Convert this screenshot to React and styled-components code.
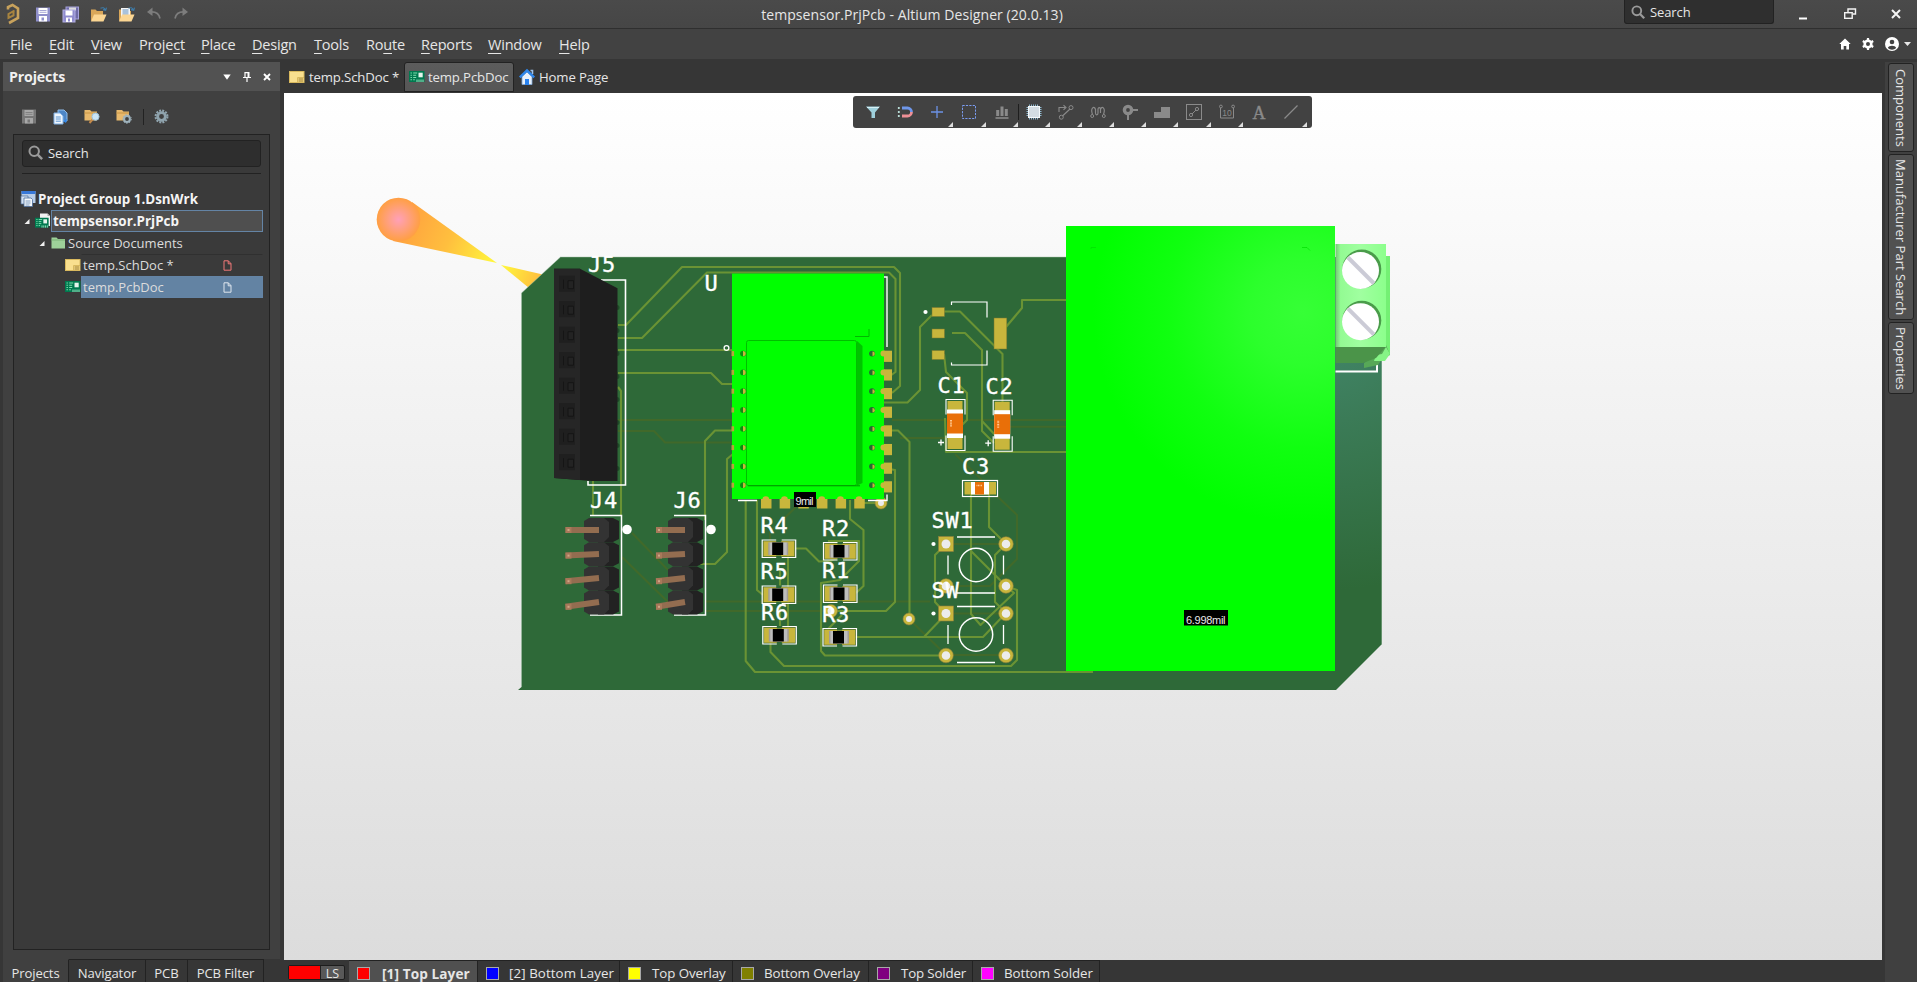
import React from "react";
import styled, { createGlobalStyle } from "styled-components";

const Global = createGlobalStyle`
  * { box-sizing: border-box; }
  html, body { margin: 0; height: 100%; overflow: hidden; }
  body { font-family: "Open Sans", "Noto Sans", sans-serif; font-size: 14px; color: #e6e6e6; background: #363636; }
`;

/* ---------- shell ---------- */
const Shell = styled.div`
  width: 100vw; height: 982px; display: flex; flex-direction: column; background: #363636; overflow: hidden;
`;
const TitleBar = styled.header`
  height: 29px; flex: none; display: grid; grid-template-columns: 700px 424px 1fr;
  background: linear-gradient(#4a4a4a, #464646); border-bottom: 1px solid #2f2f2f;
`;
const QuickBar = styled.div`
  display: flex; align-items: center; padding: 0 0 1px 4px; gap: 11px;
`;
const Title = styled.div`
  text-align: center; font-size: 14px; line-height: 29px; letter-spacing: 0.07px; white-space: nowrap;
`;
const TitleRight = styled.div`
  display: flex; align-items: flex-start; padding-left: 500px;
`;
const TitleSearch = styled.div`
  width: 150px; height: 24px; display: flex; align-items: center; gap: 5px; padding: 0 0 0 6px;
  background: #2f2f2f; border: 1px solid #222; border-top: 0; border-radius: 0 0 3px 3px; font-size: 13px; letter-spacing: -0.1px;
`;
const WinButtons = styled.div`
  flex: 1; height: 28px; display: flex; align-items: center; justify-content: space-between; padding: 0 16px 0 24px;
`;
const MenuBar = styled.nav`
  height: 30px; flex: none; display: flex; align-items: center; background: #424242; padding-left: 10px;
`;
const MenuItem = styled.span`
  width: ${(p) => p.$w}px; font-size: 14.5px; letter-spacing: -0.2px; white-space: nowrap; line-height: 30px; padding-top: 1px;
  u { text-underline-offset: 3px; text-decoration-thickness: 1px; }
`;
const MenuIcons = styled.div`
  margin-left: auto; display: flex; align-items: center; padding-right: 6px; gap: 11px;
`;
const UserGroup = styled.div` display: flex; align-items: center; gap: 5px; `;

const Work = styled.div` flex: 1; display: flex; min-height: 0; `;

/* ---------- projects panel ---------- */
const LeftColumn = styled.aside`
  width: 281px; flex: none; display: flex; flex-direction: column; padding: 3px 1px 0 3px;
`;
const PanelHead = styled.div`
  height: 29px; flex: none; display: flex; align-items: center; background: #525252; padding: 0 9px 0 6px; gap: 12px;
`;
const PanelTitle = styled.div`
  flex: 1; font-weight: 700; font-size: 14.2px; letter-spacing: -0.15px; color: #f0f0f0;
`;
const PanelBody = styled.div`
  flex: 1; min-height: 0; background: #404040; padding: 0 10px 9px 10px; display: flex; flex-direction: column;
`;
const PanelTools = styled.div`
  height: 43px; flex: none; display: flex; align-items: center; padding: 8px 0 0 8px; gap: 16px;
`;
const ToolSep = styled.i` width: 1px; height: 16px; background: #222; margin: 0 -6px 0 -5px; `;
const TreeFrame = styled.div`
  flex: 1; width: 257px; border: 1px solid #222; background: #3a3a3a; padding: 5px 6px 0 8px; display: flex; flex-direction: column;
`;
const SearchBox = styled.div`
  width: 239px; height: 27px; flex: none; border: 1px solid #222; border-radius: 3px; background: #2e2e2e;
  display: flex; align-items: center; gap: 5px; padding: 0 0 2px 5px; font-size: 13px; letter-spacing: -0.1px;
`;
const TreeRule = styled.div` width: 239px; height: 1px; background: #222; margin: 6px 0 14px; flex: none; `;
const TreeRow = styled.div`
  height: 22px; flex: none; display: flex; align-items: center; padding-left: ${(p) => p.$indent || 0}px;
  margin-left: ${(p) => p.$out || 0}px;
`;
const TreeIcon = styled.span` width: ${(p) => p.$w || 16}px; height: 22px; display: flex; align-items: center; flex: none; `;
const TreeLabel = styled.div`
  flex: 1; height: 22px; line-height: 20px; display: flex; justify-content: space-between; align-items: center; white-space: nowrap;
  padding: 0 30px 0 ${(p) => p.$pad ?? 2}px; border: 1px solid ${(p) => (p.$focus || p.$selected ? "#6484a5" : "transparent")};
  background: ${(p) => (p.$selected ? "#6383a3" : p.$focus ? "#4f4f4f" : "transparent")};
  font-weight: ${(p) => (p.$bold ? 700 : 400)}; font-size: ${(p) => (p.$bold ? "13.4px" : "13px")};
  color: ${(p) => (p.$bold ? "#f4f4f4" : "#dcdcdc")};
  ${(p) => p.$line && "border-top-color: #303030;"}
`;
const PanelTabs = styled.div`
  height: 23px; flex: none; display: flex; overflow: hidden; align-items: flex-start;
`;
const PanelTab = styled.div`
  width: ${(p) => p.$w}px; height: 30px; flex: none; text-align: center; font-size: 13.1px; line-height: 26px; letter-spacing: -0.1px;
  background: ${(p) => (p.$active ? "#404040" : "#363636")}; white-space: nowrap;
  border-top: 1px solid ${(p) => (p.$active ? "#404040" : "#222")}; border-right: 1px solid #222;
`;

/* ---------- centre ---------- */
const Centre = styled.main` flex: 1; display: flex; flex-direction: column; min-width: 0; padding: 3px 0 0 3px; `;
const DocTabs = styled.div` height: 31px; flex: none; display: flex; align-items: flex-start; `;
const DocTab = styled.div`
  width: ${(p) => p.$w}px; height: 30px; display: flex; align-items: center; gap: ${(p) => p.$gap || 4}px; padding-left: 4px;
  background: ${(p) => (p.$active ? "linear-gradient(#5c5c5c, #565656)" : "transparent")};
  border: 1px solid ${(p) => (p.$active ? "#222" : "transparent")}; border-radius: 3px 3px 0 0; white-space: nowrap;
  font-size: 13.2px; letter-spacing: -0.15px;
`;
const Canvas = styled.section`
  height: 867px; flex: none; position: relative; background: linear-gradient(#ffffff, #dcdcdc);
  > svg { display: block; }
`;
const FloatBar = styled.div`
  position: absolute; left: 569px; top: 3px; width: 459px; height: 32px; background: #424242; border-radius: 3px;
  padding-left: 4px; display: grid; grid-template-columns: repeat(14, 32.15px);
`;
const FloatCell = styled.div`
  height: 32px; display: flex; align-items: center; justify-content: center; position: relative;
`;
const FloatSep = styled.i`
  position: absolute; right: -1px; top: 8px; width: 1px; height: 16px; background: #1e1e1e;
`;
const Corner = styled.i`
  position: absolute; right: 0; bottom: 1px; border-left: 5px solid transparent; border-bottom: 5px solid #dedede;
`;
const LayerTabs = styled.div` height: 22px; flex: none; display: flex; overflow: hidden; align-items: flex-start; `;
const LayerSet = styled.div`
  width: 57px; height: 15px; margin: 5px 4px 0 4px; display: flex; border: 1px solid #1d1d1d; border-radius: 2px; background: #585858;
  font-size: 12.5px; line-height: 15px; flex: none;
  &::before { content: ""; width: 31px; background: #f00; border-right: 1px solid #222; }
  span { flex: 1; text-align: center; }
`;
const LayerTab = styled.div`
  width: ${(p) => p.$w}px; height: 27px; flex: none; display: flex; align-items: center; padding: 0 0 2px 8px; white-space: nowrap;
  border-top: 1px solid #222; border-right: 1px solid #222; background: ${(p) => (p.$active ? "#505050" : "#363636")};
  font-weight: ${(p) => (p.$active ? 700 : 400)}; font-size: ${(p) => (p.$active ? "13.6px" : "13.3px")};
  letter-spacing: ${(p) => p.$ls || 0}px; gap: ${(p) => p.$gap || 10}px;
`;
const Swatch = styled.i` width: 13px; height: 13px; border: 1px solid #a8a8a8; background: ${(p) => p.$c}; flex: none; `;

/* ---------- right rail ---------- */
const Rail = styled.aside`
  width: 32px; margin: 3px 0 0 3px; flex: none; background: #404040; display: flex; flex-direction: column; align-items: flex-end;
  padding: 1px 3px 0 0; gap: 2px;
`;
const RailTab = styled.div`
  width: 26px; height: ${(p) => p.$h}px; border: 1px solid #222; border-radius: 3px; background: #515151;
  writing-mode: vertical-rl; text-align: center; line-height: 24px; font-size: 13px; white-space: nowrap;
`;

/* ---------- icons ---------- */
const Drawing = styled.svg`
  flex: none; overflow: visible; transform: ${(p) => (p.$flip ? "scaleX(-1)" : "none")};
`;
const Svg = ({ w = 16, h = 16, vb, flip, children }) => (
  <Drawing width={w} height={h} viewBox={vb || `0 0 ${w} ${h}`} fill="none" $flip={flip}>{children}</Drawing>
);
const AppLogo = () => (
  <Svg w={20} h={20}>
    <path d="M4 5.5V3L8.5 1l5.5 3.5v9.5L5 19" stroke="#c8a25c" strokeWidth="2.6" />
    <path d="M10.5 6.5L4.5 10v4l5-2.5v-4" stroke="#a8843f" strokeWidth="2" />
  </Svg>
);
const Floppy = ({ c = "#8f8fca", light = "#fff" }) => (
  <Svg w={16} h={15}>
    <rect x="1" y=".5" width="14" height="14" fill={c} />
    <rect x="3.5" y="1" width="9" height="6" fill={light} /><path d="M4.5 3.5h7M4.5 5.3h7" stroke={c} strokeWidth=".8" />
    <rect x="4" y="9" width="8" height="5.5" fill={light} /><rect x="6.5" y="10.5" width="2.5" height="3" fill={c} />
  </Svg>
);
const FloppyAll = () => (
  <Svg w={17} h={17}>
    <rect x="4" y="1" width="12.5" height="12" fill="#6f6ba8" stroke="#a6a2dc" /><rect x="7" y="1.5" width="7" height="3" fill="#ddd" />
    <rect x="1" y="4" width="12" height="12" fill="#8f8bce" stroke="#b3b0e4" /><rect x="3.5" y="4.5" width="7" height="5" fill="#fff" />
    <rect x="4" y="11.5" width="6" height="4.5" fill="#fff" /><rect x="6" y="12.5" width="2" height="3" fill="#8f8bce" />
  </Svg>
);
const OpenFolder = ({ doc }) => (
  <Svg w={17} h={17}>
    <path d="M1 15V3.5h4.5L7 5h6v4" fill="#d9a75a" />
    {doc && <><rect x="3" y="2" width="9" height="9" fill="#f6f6f6" /><path d="M4.5 4h6M4.5 6h6M4.5 8h6" stroke="#5f8fc0" /></>}
    <path d="M1 15.5L4 8.5h12.5L13.5 15.5z" fill="#fbd693" />
    <path d="M10.5 2.2c2-1 4-.6 5 1.8M16.5 1.6L15.7 4.4 13 3.6" stroke="#3d7ba8" strokeWidth="1.1" />
  </Svg>
);
const Undo = ({ flip }) => (
  <Svg w={16} h={14} flip={flip}>
    <path d="M4 5c5-.5 9 1.500 10 6.500" stroke="#7d7d7d" strokeWidth="1.7" /><path d="M6.500.5L1 5l5.500 4z" fill="#7d7d7d" />
  </Svg>
);
const Lens = ({ s = 14 }) => (
  <Svg w={s} h={s} vb="0 0 14 14"><circle cx="5.8" cy="5.8" r="4.4" stroke="#9a9a9a" strokeWidth="1.9" /><path d="M9 9l4.2 4.2" stroke="#9a9a9a" strokeWidth="2.3" /></Svg>
);
const PcbIcon = ({ sheet }) => (
  <Svg w={16} h={16}>
    {sheet && <><path d="M5 .5h7.500l2.500 2.500v10H5z" fill="#f2f2f2" /><path d="M12.500.5v2.500H15z" fill="#a9a9a9" /></>}
    <g transform={sheet ? "translate(0 2.5) scale(.88 .9)" : "translate(0 -.5)"}>
      <rect x="0" y="2.500" width="15.500" height="11" fill="#00794f" />
      <path d="M1.500 4.500h1.400M4.200 4.500h4M1.500 6.800h1.400M4.200 6.800h3M1.500 9h1.400M4.200 9h3M1.500 11.200h1.400M4.200 11.200h1.600" stroke="#7fe0b0" strokeWidth="1.100" />
      <rect x="9.500" y="4.200" width="4.200" height="4.600" fill="#e4f4ec" />
      <path d="M8 11v2.500M10 11v2.500M12 11v2.500M14 11v2.500" stroke="#9fe6c4" />
    </g>
  </Svg>
);
const SchIcon = () => (
  <Svg w={16} h={13}><rect x=".5" y=".5" width="14.5" height="11" fill="#f9df8e" stroke="#d9b95e" /><path d="M8.500 11V6.500H15" stroke="#d9b95e" /><path d="M9.500 8h4.500M9.500 10h4.500" stroke="#9a7a2c" /></Svg>
);
const HomeColor = () => (
  <Svg w={16} h={16}><path d="M11.5 1.5h2V5" stroke="#9fc3ec" strokeWidth="1.6" /><path d="M3 7.5v8h10v-8L8 3z" fill="#e9f1fb" stroke="#7fa8d8" strokeWidth=".8" /><path d="M.8 8.3L8 1.5l7.2 6.8" stroke="#2f86ea" strokeWidth="2.4" /><rect x="6" y="10" width="4" height="6" fill="#2a83f0" /></Svg>
);
const DocsIcon = () => (
  <Svg w={15} h={16}><path d="M5 1h6l3 3v8H5z" fill="#4d86c6" stroke="#8fbbe8" /><path d="M1 4h6l3 3v8H1z" fill="#eef5fc" stroke="#7fb0e6" /><path d="M2.8 8h5M2.8 10h5M2.8 12.2h5" stroke="#5b93cf" /><path d="M10 12l4-2-1 4z" fill="#2f86ea" /></Svg>
);
const FolderLens = () => (
  <Svg w={16} h={15}><path d="M.5 11.5V1H6l1.5 1.5H13v9z" fill="#e8b96d" /><path d="M.5 4h12.5" stroke="#c99544" /><path d="M8.5 10.5L5.5 14" stroke="#c58a4a" strokeWidth="2" /><circle cx="11.5" cy="7.7" r="3.6" fill="#c9e4f5" stroke="#9cc0d6" /></Svg>
);
const Cog = ({ s = 16, c = "#8fa3ad" }) => (
  <Svg w={s} h={s} vb="0 0 16 16"><circle cx="8" cy="8" r="6.3" stroke={c} strokeWidth="2.2" strokeDasharray="2.1 1.2" /><circle cx="8" cy="8" r="4.1" stroke={c} strokeWidth="3" /></Svg>
);
const FolderCog = () => (
  <Svg w={16} h={15}><path d="M.5 11.5V1H6l1.5 1.5H13v9z" fill="#e8b96d" /><path d="M.5 4h12.5" stroke="#c99544" /><circle cx="11" cy="10" r="2.9" fill="#404040" stroke="#9fb3bd" strokeWidth="2" /><circle cx="11" cy="10" r="4.3" stroke="#9fb3bd" strokeDasharray="1.5 1.5" /></Svg>
);
const GroupIcon = () => (
  <Svg w={16} h={16}><rect x="1.5" y="0" width="14" height="12" fill="#b8cde8" /><rect x="1.5" y="0" width="14" height="3" fill="#3878d8" /><path d="M1 5h7v8H1z" fill="#d4e2f3" stroke="#4a6c9a" strokeWidth=".7" /><path d="M4 7h7l1.5 1.5V15.5H4z" fill="#f5f8fc" stroke="#4a6c9a" strokeWidth=".8" /><path d="M5.5 10h5M5.5 12h5M5.5 14h4" stroke="#7f9cc0" /></Svg>
);
const GreenFolder = () => (
  <Svg w={15} h={14}><path d="M.5 12.5V1.5h5L7 3h7v9.5z" fill="#9ed19a" /><path d="M.5 4H14" stroke="#7ab277" /></Svg>
);
const PageMark = ({ c }) => (
  <Svg w={9} h={11}><path d="M1 .8h4.3L8 3.6v6.6H1zM5.2.8v3H8" stroke={c} /></Svg>
);
const Expander = () => <Svg w={7} h={7}><path d="M5.500 1v5H.5z" fill="#f0f0f0" /></Svg>;

const G = "#8a8a8a";
const floatIcons = [
  { el: <Svg><path d="M1 2.5h14L10 8.5V14H6.5V8.5z" fill="#9fd0dc" /><path d="M2 3.5h12" stroke="#d6f0f6" /></Svg> },
  { el: <Svg><path d="M5 4h5.5a4 4 0 014 4" stroke="#6f97ea" strokeWidth="2.8" /><path d="M5 12h5.5a4 4 0 004-4" stroke="#ee8f96" strokeWidth="2.8" /><path d="M1.8 3v10" stroke="#b9ddd8" strokeWidth="1.8" strokeDasharray="2 2" /></Svg> },
  { el: <Svg><path d="M8 2v12M2 8h12" stroke="#6c92e6" strokeWidth="1.3" /></Svg>, corner: true },
  { el: <Svg><rect x="1.5" y="1.5" width="13" height="13" stroke="#7b9cf0" strokeDasharray="2.2 1.2" /></Svg>, corner: true },
  { el: <Svg><path d="M1.5 14h13" stroke={G} strokeWidth="1.6" /><path d="M3.7 6v6M8 2.5V12M12.3 5v7" stroke={G} strokeWidth="3" /></Svg>, corner: true, sep: true },
  { el: <Svg><path d="M3.500 .5v15M5.500 .5v15M7.500 .5v15M9.500 .5v15M11.500 .5v15M.5 3.500h15M.5 5.500h15M.5 7.500h15M.5 9.500h15M.5 11.500h15" stroke="#8fb7cd" /><rect x="2.500" y="2.500" width="11" height="11" fill="#d4dce2" stroke="#f4f8fa" /></Svg>, corner: true },
  { el: <Svg><path d="M1 8V3.500h6M5.500 1.200L8 3.500 5.500 5.800M4.500 12L12 5" stroke={G} strokeWidth="1.1" /><circle cx="13" cy="3.6" r="2" stroke={G} /><circle cx="3.3" cy="13.2" r="2" stroke={G} /></Svg>, corner: true },
  { el: <Svg><path d="M2.500 10.500C0 3.500 4.500 1.500 5.500 5.500v3.500c0 2.500 2.500 2.500 2.500 0V5.500c0-2.500 2.500-2.500 2.500 0V9M10.500 5.500c1-4 5.500-2 3 5" stroke={G} strokeWidth="1.2" /><circle cx="2.200" cy="12" r="1.500" stroke={G} /><circle cx="13.800" cy="12" r="1.500" stroke={G} /></Svg>, corner: true },
  { el: <Svg w={18}><circle cx="7" cy="6" r="3.6" stroke={G} strokeWidth="3.4" /><path d="M7 10v6M11 6h6" stroke={G} strokeWidth="2" /></Svg>, corner: true },
  { el: <Svg><path d="M0 14V8h7V3h9v11z" fill={G} /></Svg>, corner: true },
  { el: <Svg><rect x=".5" y=".5" width="15" height="15" stroke={G} /><path d="M6 10L10 6" stroke={G} /><circle cx="11" cy="5" r="1.6" stroke={G} /><circle cx="5" cy="11" r="1.6" stroke={G} /></Svg>, corner: true },
  { el: <Svg><path d="M1.5 4v10h13V4" stroke={G} /><circle cx="1.9" cy="2.5" r="1.4" stroke={G} /><circle cx="14.1" cy="2.5" r="1.4" stroke={G} /><text x="8" y="11.5" textAnchor="middle" fontSize="8.5" fill={G} fontFamily="Liberation Sans">10</text></Svg>, corner: true },
  { el: <Svg w={18} h={24}><text x="9" y="18.500" textAnchor="middle" fontSize="18" fill={G} stroke={G} strokeWidth=".4" fontFamily="Liberation Serif">A</text></Svg> },
  { el: <Svg><path d="M1.5 14.5L14.5 1.5" stroke={G} strokeWidth="1.3" /></Svg>, corner: true },
];

/* ---------- board drawing ---------- */
const traces = [
  "618,325 626,325 682,267 894,267 900,273 900,386 892,393",
  "618,338 642,338 707,272.5 889,272.5 895.5,279 895.5,372 890,376",
  "618,350 733,350", "618,373 711,373 722,384 733,384",
  "733,430.5 715,430.5 705,441 705,520", "733,454 727,459 727,552 715,564 700,564",
  "618,387 621,391 621,515", "593,481 593,515",
  "884,402.5 907.5,402.5 920,390 920,327 932,315",
  "884,430.5 898,430.5 909.5,442 909.5,619",
  "943,311.5 960,311.5 1002.5,354 1002.5,402", "952,333 965,333 982,350 982,431 994,443",
  "982,421 996,436", "944,354 946,372 967,393 967,420 961,426",
  "1006,327 1022,308 1022,300 1066,300", "965,452 946,452 945,418",
  "946,452 1066,452", "889,469 895,470 895,602 886,611 833,611",
  "745.7,500 745.7,661 755,672 1093,672", "757,500 757,590 763,595",
  "850,500 850,519 863.5,530 863.5,586 856,593", "795,548.5 806,548.5 819,561.5 830,561 842,556",
  "828,541 859,541 859,561 840,580 821,583 821,651 825,655.5 945,655.5",
  "855,637 983,637 1006,613", "924,637 946,614", "770.5,640 770.5,652 784,666 1011,666 1017,660 1017,590 1006,586",
  "971,492 971,614 980.5,625 1014,593 1006,586", "989,492 989,527 1006,544 995,555 995,602 1006,613",
  "971,551 1006,586", "946,544 935,555 935,602 946,614", "788,549 788,630", "780,570 780,630", "825,632 842,615", "860,503 880,503",
];
const buried = [
  "618,420 733,420", "618,431 654,431 665,442.5 733,442.5", "892,420 1066,420", "1008,426.7 1066,426.7", "900,438 945,438",
  "740,601.5 930,601.5", "706,601.5 740,601.5", "706,611 833,611", "955,454 982,480", "997,496 1017,515 1017,559 990,586 946,586",
  "946,544 1006,544", "946,613.5 1006,613.5", "946,655 1006,655", "909,619 946,655", "632,533 668,570", "622,557 668,602", "770,549 770,532 796,507",
];
const range = (n) => Array.from({ length: n }, (_, i) => i);

const Label = ({ x, y, children }) => (
  <text x={x - 0.5} y={y} fontFamily="DejaVu Sans Mono" fontSize="22" letterSpacing=".7" fill="#fff" stroke="#fff" strokeWidth=".35">{children}</text>
);
const Resistor = ({ x, y }) => (
  <g transform={`translate(${x} ${y})`}>
    <rect x="1.5" y="1.5" width="31.5" height="15.5" fill="#c8b63c" stroke="#5d7432" strokeWidth=".6" />
    <rect x="6.5" y="3" width="20" height="12.5" fill="#a39d96" />
    <rect x="8" y="3" width="17" height="12.5" fill="#bdbdbd" />
    <rect x="10.5" y="3" width="11" height="12.5" fill="#000" />
    <rect x="14.5" y="0" width="5" height="2.5" fill="#2e6938" /><rect x="14.5" y="16" width="5" height="3" fill="#2e6938" />
    <path d="M14.5 .5H.5V18H14.5M20 .5H34V18H20" fill="none" stroke="#fff" strokeWidth="1.2" />
  </g>
);
const Capacitor = ({ x, y }) => (
  <g transform={`translate(${x} ${y})`}>
    <rect x="2" y="2" width="15" height="48" fill="#c8b63c" />
    <rect x="1.5" y="10.5" width="16" height="28.5" fill="#fff" />
    <rect x="1.5" y="14.5" width="16" height="20" fill="#e96f08" />
    <path d="M5.5 21v7" stroke="#ffc890" strokeWidth="2" strokeDasharray="1 .6" />
    <path d="M.5 15.5V.5H19.5V15.5M.5 36.5V51.5H19.5V36.5" fill="none" stroke="#fff" strokeWidth="1.1" />
    <path d="M-7.5 43.500h6M-4.5 40.500v6" stroke="#fff" strokeWidth="1.3" />
  </g>
);
const Ring = ({ x, y, r = 7.3 }) => (
  <g><circle cx={x} cy={y} r={r - 1.5} fill="#ececec" stroke="#c8b63c" strokeWidth="3" /><circle cx={x} cy={y} r={r} fill="none" stroke="#8e7f3c" strokeWidth=".6" /></g>
);
const Button4 = ({ y }) => (
  <g transform={`translate(0 ${y})`}>
    <circle cx="933.5" cy="0" r="2.1" fill="#fff" />
    <rect x="938.5" y="-7.5" width="15" height="15" fill="#c8b63c" stroke="#8e7f3c" strokeWidth=".6" /><circle cx="946" cy="0" r="4.5" fill="#ececec" />
    <Ring x={1006} y={0} /><Ring x={1006} y={42} /><Ring x={946} y={42} />
    <circle cx="976" cy="21" r="16.7" fill="none" stroke="#fff" strokeWidth="1.5" />
    <path d="M957 -7h38M957 49h38M948 11.5v19M1003.5 11.5v19" stroke="#fff" strokeWidth="1.3" />
  </g>
);
const PinHeader = ({ x, pin, len }) => (
  <g>
    <path d={`M${x + 6} 515.5h31.5v99.5h-31.5`} fill="none" stroke="#fff" strokeWidth="1.5" />
    {range(4).map((i) => {
      const t = 518 + i * 24.2;
      return (
        <g key={i}>
          <path d={`M${x + 14} ${t}H${x + 29}l6 3v18l-6 3H${x + 14}z`} fill="#222" />
          <path d={`M${x} ${t + 3}l5-3H${x + 20}l5 4v15l-5 5H${x + 5}l-5-3z`} fill="#333" />
          <path d={`M${pin} ${530 + i * 25.6}L${pin + len} ${530 + i * 24}`} stroke="#936d50" strokeWidth="6" />
          <rect x={pin} y={527 + i * 25.6} width="6" height="6" fill="#a8795a" /><rect x={pin + 2} y={529 + i * 25.6} width="2" height="2" fill="#d0a585" />
        </g>
      );
    })}
    <circle cx={x + 43} cy="529.5" r="4.8" fill="#fff" />
  </g>
);
const Screw = ({ y }) => (
  <g><circle cx="1361.8" cy={y - 0.5} r="19.5" fill="#4a9c4a" /><circle cx="1360.5" cy={y + 1} r="18.5" fill="#fff" /><path d={`M1348 ${y - 12}L1374 ${y + 14}`} stroke="#cbcbd6" strokeWidth="4" /></g>
);

const Board = () => (
  <svg width="1598" height="867" viewBox="284 93 1598 867">
    <defs>
      <radialGradient id="lamp"><stop offset="0" stopColor="#ffa0b8" /><stop offset=".35" stopColor="#ffa090" /><stop offset="1" stopColor="#ff9f42" /></radialGradient>
      <linearGradient id="beam" gradientUnits="userSpaceOnUse" x1="400" y1="220" x2="497" y2="263"><stop offset="0" stopColor="#ff9f3f" /><stop offset=".5" stopColor="#ffbf3e" /><stop offset="1" stopColor="#fff93c" /></linearGradient>
      <linearGradient id="beam2" gradientUnits="userSpaceOnUse" x1="501" y1="265" x2="540" y2="282"><stop offset="0" stopColor="#fff93c" /><stop offset="1" stopColor="#ffbc3e" /></linearGradient>
      <radialGradient id="mask" gradientUnits="userSpaceOnUse" cx="1330" cy="330" r="260"><stop offset="0" stopColor="#42866a" /><stop offset=".35" stopColor="#3b7b57" /><stop offset="1" stopColor="#2e6938" /></radialGradient>
      <radialGradient id="glow" gradientUnits="userSpaceOnUse" cx="1303" cy="312" r="210"><stop offset="0" stopColor="#36ff36" /><stop offset=".25" stopColor="#2cff2c" /><stop offset=".65" stopColor="#10ff10" /><stop offset="1" stopColor="#00ff00" /></radialGradient>
      <linearGradient id="term"><stop offset="0" stopColor="#74c874" /><stop offset=".1" stopColor="#93fb93" /><stop offset=".5" stopColor="#a0ffa0" /><stop offset="1" stopColor="#8cff8c" /></linearGradient>
    </defs>
    <path d="M412 202L497 263 393 241z" fill="url(#beam)" />
    <path d="M501 265L545 275 529 288z" fill="url(#beam2)" />
    <circle cx="398.5" cy="219.5" r="21.8" fill="url(#lamp)" />

    <path d="M521.5 293L560.5 257H1382V644L1336 690H518l3.500-3z" fill="url(#mask)" />
    <path d="M521.5 687V293L560.5 257H1066M1381.5 360V644" stroke="#a5c2ab" strokeOpacity=".6" fill="none" strokeWidth=".8" />
    {buried.map((p) => <polyline key={p} points={p} fill="none" stroke="#41692a" strokeWidth="2" />)}
    {traces.map((p) => <polyline key={p} points={p} fill="none" stroke="#6a9334" strokeWidth="2.1" strokeLinejoin="round" />)}

    <path d="M601 280h24.5V485H588v-4" fill="none" stroke="#fff" strokeWidth="1.6" />
    {range(8).map((i) => <circle key={i} cx="617" cy={307.5 + i * 23} r="2.5" fill="#1f4a28" />)}
    <path d="M554 268.7h26l37.5 19.5V481H592L554 478z" fill="#1e1e1e" />
    <path d="M554 268.7h26V480L554 478z" fill="#262626" />
    {range(8).map((i) => {
      const y = 283.7 + i * 25.5;
      return <g key={i}><rect x="559" y={y - 8} width="16" height="16" fill="#1f1f1f" /><path d={`M563.5 ${y + 5}v-9M568 ${y + 5}v-8h5.5v8z`} stroke="#151515" fill="#232323" /></g>;
    })}

    {range(8).map((i) => <rect key={i} x="882" y={350.7 + i * 18.65} width="10" height="11.2" fill="#c8b63c" />)}
    {range(6).map((i) => <rect key={i} x={761 + i * 18.65} y="497" width="10.5" height="11.5" fill="#c8b63c" />)}
    <Ring x={881} y={503} r={6} />
    <path d="M884 277h3v70M738 500.5h19M868 500.5h19v-6" fill="none" stroke="#fff" strokeWidth="1.4" />
    <rect x="732" y="273.5" width="152" height="225.5" fill="#0f0" />
    {range(8).map((i) => {
      const y = 353.6 + i * 18.8;
      return (
        <g key={i}>
          <rect x="731.5" y={y - 2.5} width="2.6" height="5" fill="#b6a63a" />
          <circle cx="743" cy={y} r="2.9" fill="#0a8c12" /><path d={`M743 ${y - 2.7}a2.7 2.7 0 010 5.4z`} fill="#c8b63c" />
          <circle cx="872" cy={y} r="2.9" fill="#236b30" /><path d={`M872.5 ${y - 2}a2 2 0 010 4.5z`} fill="#c8b63c" />
          <circle cx="883.5" cy={y} r="3" fill="#c8b63c" />
        </g>
      );
    })}
    {range(6).map((i) => <path key={i} d={`M${762.5 + i * 18.65} 499a3.3 2.8 0 016.6 0z`} fill="#c8b63c" />)}
    <rect x="746.5" y="340.5" width="110" height="145" rx="2" fill="none" stroke="#00b800" strokeWidth=".9" />
    <path d="M857 341l5.500 5V483l-5.500 2.500z" fill="#00c400" /><path d="M748 485.800H860" stroke="#009a00" />
    <path d="M855 336.500h14v-7.500" fill="none" stroke="#00b000" strokeWidth=".9" />
    <circle cx="726.5" cy="348" r="2.4" fill="none" stroke="#fff" strokeWidth="1.3" />
    <rect x="794" y="492" width="22" height="15" fill="#000" />
    <text x="795.5" y="505" textLength="18" fontFamily="Liberation Sans" fontSize="11" fill="#e8e8e8">9mil</text>

    <PinHeader x={584} pin={565.5} len={33.5} />
    <PinHeader x={668} pin={656} len={29} />

    <Resistor x={761.7} y={539.5} /><Resistor x={823} y={542} /><Resistor x={761.7} y={585.5} />
    <Resistor x={823} y={584.5} /><Resistor x={762.3} y={626} /><Resistor x={822.5} y={628} />
    <Ring x={831} y={611} r={6.5} /><Ring x={909} y={619} r={6} />

    {[307.5, 329, 350.5].map((y) => <rect key={y} x="932" y={y} width="12.5" height="9" fill="#c8b63c" stroke="#79772f" strokeWidth=".5" />)}
    <rect x="994" y="318" width="12.8" height="31" fill="#c8b63c" stroke="#79772f" strokeWidth=".5" />
    <path d="M951.5 305v-3H987v15.5M987 350.5V365H951.5v-2.5" fill="none" stroke="#fff" strokeWidth="1.2" />
    <circle cx="925.5" cy="312" r="2.1" fill="#fff" />
    <Capacitor x={945.5} y={399} /><Capacitor x={992.7} y={399.7} />
    <g>
      <rect x="964.5" y="482" width="31.5" height="12.5" fill="#c8b63c" /><rect x="971" y="482" width="18" height="12.5" fill="#fff" /><rect x="975" y="482" width="9" height="12.5" fill="#e96f08" />
      <path d="M976.5 485.5h5.500" stroke="#ffc890" strokeWidth="1.6" strokeDasharray="1 .5" /><rect x="962.5" y="480.5" width="35" height="16" fill="none" stroke="#fff" strokeWidth="1.2" />
    </g>
    <Button4 y={544} /><Button4 y={613.5} />

    <Label x={588.5} y={272}>J5</Label><Label x={705} y={291}>U</Label><Label x={590.5} y={508}>J4</Label><Label x={674} y={508}>J6</Label>
    <Label x={761} y={533}>R4</Label><Label x={822.5} y={535.5}>R2</Label><Label x={761} y={579}>R5</Label><Label x={822.5} y={578}>R1</Label>
    <Label x={761.5} y={619.5}>R6</Label><Label x={822.5} y={621.5}>R3</Label>
    <Label x={938} y={393}>C1</Label><Label x={986} y={393.5}>C2</Label><Label x={962.5} y={474}>C3</Label>
    <Label x={932} y={528}>SW1</Label><Label x={932} y={597.5}>SW</Label>

    <rect x="1386" y="256" width="4" height="99" fill="#74f074" />
    <path d="M1335.5 371.5H1377V363" fill="none" stroke="#fff" strokeWidth="2" />
    <path d="M1382 340l4 5 4 10-8 4-4 6-14 3v-5l14-10z" fill="#57a857" /><path d="M1376 355l6-1 4-7 4 7-5 7h-11z" fill="#86f486" />
    <path d="M1335.5 346.5H1386L1376 358l-13 5H1335.5z" fill="#4b9449" />
    <rect x="1335.5" y="244" width="50.5" height="103" fill="url(#term)" />
    <Screw y={269.5} /><Screw y={320.7} />

    <rect x="1066" y="226" width="269" height="445" fill="url(#glow)" />
    <path d="M1091 249v-1.500h5M1302 247.500h5l3 3" stroke="#00e000" strokeWidth=".7" fill="none" />
    <rect x="1184" y="610" width="44" height="15.5" fill="#000" />
    <text x="1186" y="623.5" textLength="39.5" fontFamily="Liberation Sans" fontSize="11" fill="#e8e8e8">6.998mil</text>
  </svg>
);

/* ---------- data ---------- */
const menus = [
  ["", "F", "ile", 39], ["", "E", "dit", 42], ["", "V", "iew", 48], ["Proje", "c", "t", 62], ["", "P", "lace", 51], ["", "D", "esign", 62],
  ["", "T", "ools", 52], ["Ro", "u", "te", 55], ["", "R", "eports", 67], ["", "W", "indow", 71], ["", "H", "elp", 40],
];
const layers = [
  { c: "#f00", t: "[1] Top Layer", w: 129, active: true, gap: 12, ls: 0.1 },
  { c: "#00f", t: "[2] Bottom Layer", w: 142, gap: 10, ls: 0.1 },
  { c: "#ff0", t: "Top Overlay", w: 113, gap: 11, ls: -0.05 },
  { c: "#808000", t: "Bottom Overlay", w: 136, gap: 10, ls: -0.1 },
  { c: "#800080", t: "Top Solder", w: 104, gap: 11, ls: -0.15 },
  { c: "#f0f", t: "Bottom Solder", w: 127, gap: 10, ls: -0.05 },
];

export default function App() {
  return (
    <Shell>
      <Global />
      <TitleBar>
        <QuickBar><AppLogo /><Floppy /><FloppyAll /><OpenFolder /><OpenFolder doc /><Undo /><Undo flip /></QuickBar>
        <Title>tempsensor.PrjPcb - Altium Designer (20.0.13)</Title>
        <TitleRight>
          <TitleSearch><Lens />Search</TitleSearch>
          <WinButtons>
            <Svg w={10} h={12}><path d="M1 10.5h8" stroke="#fff" strokeWidth="2" /></Svg>
            <Svg w={12} h={12}><path d="M4 4V1h7.5v5H9" stroke="#f4f4f4" strokeWidth="1.4" /><rect x=".7" y="4.7" width="7.5" height="5.6" stroke="#f4f4f4" strokeWidth="1.4" /></Svg>
            <Svg w={10} h={10}><path d="M1 1l8 8M9 1L1 9" stroke="#f4f4f4" strokeWidth="2" /></Svg>
          </WinButtons>
        </TitleRight>
      </TitleBar>
      <MenuBar>
        {menus.map(([a, k, b, w]) => <MenuItem key={a + k + b} $w={w}>{a}<u>{k}</u>{b}</MenuItem>)}
        <MenuIcons>
          <Svg w={12} h={12}><path d="M6 .5L.3 6H2v5.5h2.7V8h2.6v3.5H10V6h1.7z" fill="#fff" /></Svg>
          <Svg w={12} h={12}><circle cx="6" cy="6" r="3.3" stroke="#fff" strokeWidth="2.6" /><path d="M6 0v2.5M6 9.5V12M.8 3l2 1.2M9.2 7.8l2 1.2M.8 9l2-1.2M9.2 4.2l2-1.2" stroke="#fff" strokeWidth="2.2" /></Svg>
          <UserGroup>
            <Svg w={14} h={14}><circle cx="7" cy="7" r="7" fill="#fff" /><circle cx="7" cy="5" r="2.3" fill="#424242" /><path d="M2.8 11c1-3 7.4-3 8.4 0A6 6 0 017 12.800 6 6 0 012.800 11z" fill="#424242" /></Svg>
            <Svg w={7} h={4}><path d="M0 0h7L3.5 4z" fill="#e8e8e8" /></Svg>
          </UserGroup>
        </MenuIcons>
      </MenuBar>
      <Work>
        <LeftColumn>
          <PanelHead>
            <PanelTitle>Projects</PanelTitle>
            <Svg w={8} h={6}><path d="M.3.5h7.4L4 5.8z" fill="#fff" /></Svg>
            <Svg w={8} h={10}><path d="M2 0v5.5M0 5.5h8M4 5.5V10M1.5.6h4.5" stroke="#fff" strokeWidth="1.2" /><path d="M5.5 0v5.5" stroke="#fff" strokeWidth="2" /></Svg>
            <Svg w={8} h={8}><path d="M1 1l6 6M7 1L1 7" stroke="#fff" strokeWidth="1.9" /></Svg>
          </PanelHead>
          <PanelBody>
            <PanelTools><Floppy c="#777" light="#a8a8a8" /><DocsIcon /><FolderLens /><FolderCog /><ToolSep /><Cog s={15} /></PanelTools>
            <TreeFrame>
              <SearchBox><Lens s={15} />Search</SearchBox>
              <TreeRule />
              <TreeRow $out={-2}><TreeIcon><GroupIcon /></TreeIcon><TreeLabel $bold $pad={1}>Project Group 1.DsnWrk</TreeLabel></TreeRow>
              <TreeRow $indent={2}><TreeIcon $w={11}><Expander /></TreeIcon><TreeIcon><PcbIcon sheet /></TreeIcon><TreeLabel $bold $focus $pad={1}>tempsensor.PrjPcb</TreeLabel></TreeRow>
              <TreeRow $indent={17}><TreeIcon $w={12}><Expander /></TreeIcon><TreeIcon $w={15}><GreenFolder /></TreeIcon><TreeLabel $pad={1}>Source Documents</TreeLabel></TreeRow>
              <TreeRow $indent={43}><TreeIcon><SchIcon /></TreeIcon><TreeLabel $line $pad={1}>temp.SchDoc *<PageMark c="#f07878" /></TreeLabel></TreeRow>
              <TreeRow $indent={43}><TreeIcon><PcbIcon /></TreeIcon><TreeLabel $selected $pad={1}>temp.PcbDoc<PageMark c="#dfe6ee" /></TreeLabel></TreeRow>
            </TreeFrame>
          </PanelBody>
          <PanelTabs>
            <PanelTab $w={66} $active>Projects</PanelTab><PanelTab $w={77}>Navigator</PanelTab><PanelTab $w={42}>PCB</PanelTab><PanelTab $w={76}>PCB Filter</PanelTab>
          </PanelTabs>
        </LeftColumn>
        <Centre>
          <DocTabs>
            <DocTab $w={120}><SchIcon />temp.SchDoc *</DocTab>
            <DocTab $w={110} $active $gap={3}><PcbIcon />temp.PcbDoc</DocTab>
            <DocTab $w={110}><HomeColor />Home Page</DocTab>
          </DocTabs>
          <Canvas>
            <Board />
            <FloatBar>
              {floatIcons.map((f, i) => <FloatCell key={i}>{f.el}{f.corner && <Corner />}{f.sep && <FloatSep />}</FloatCell>)}
            </FloatBar>
          </Canvas>
          <LayerTabs>
            <LayerSet><span>LS</span></LayerSet>
            {layers.map((l) => <LayerTab key={l.t} $w={l.w} $active={l.active} $gap={l.gap} $ls={l.ls}><Swatch $c={l.c} />{l.t}</LayerTab>)}
          </LayerTabs>
        </Centre>
        <Rail><RailTab $h={89}>Components</RailTab><RailTab $h={166}>Manufacturer Part Search</RailTab><RailTab $h={72}>Properties</RailTab></Rail>
      </Work>
    </Shell>
  );
}
